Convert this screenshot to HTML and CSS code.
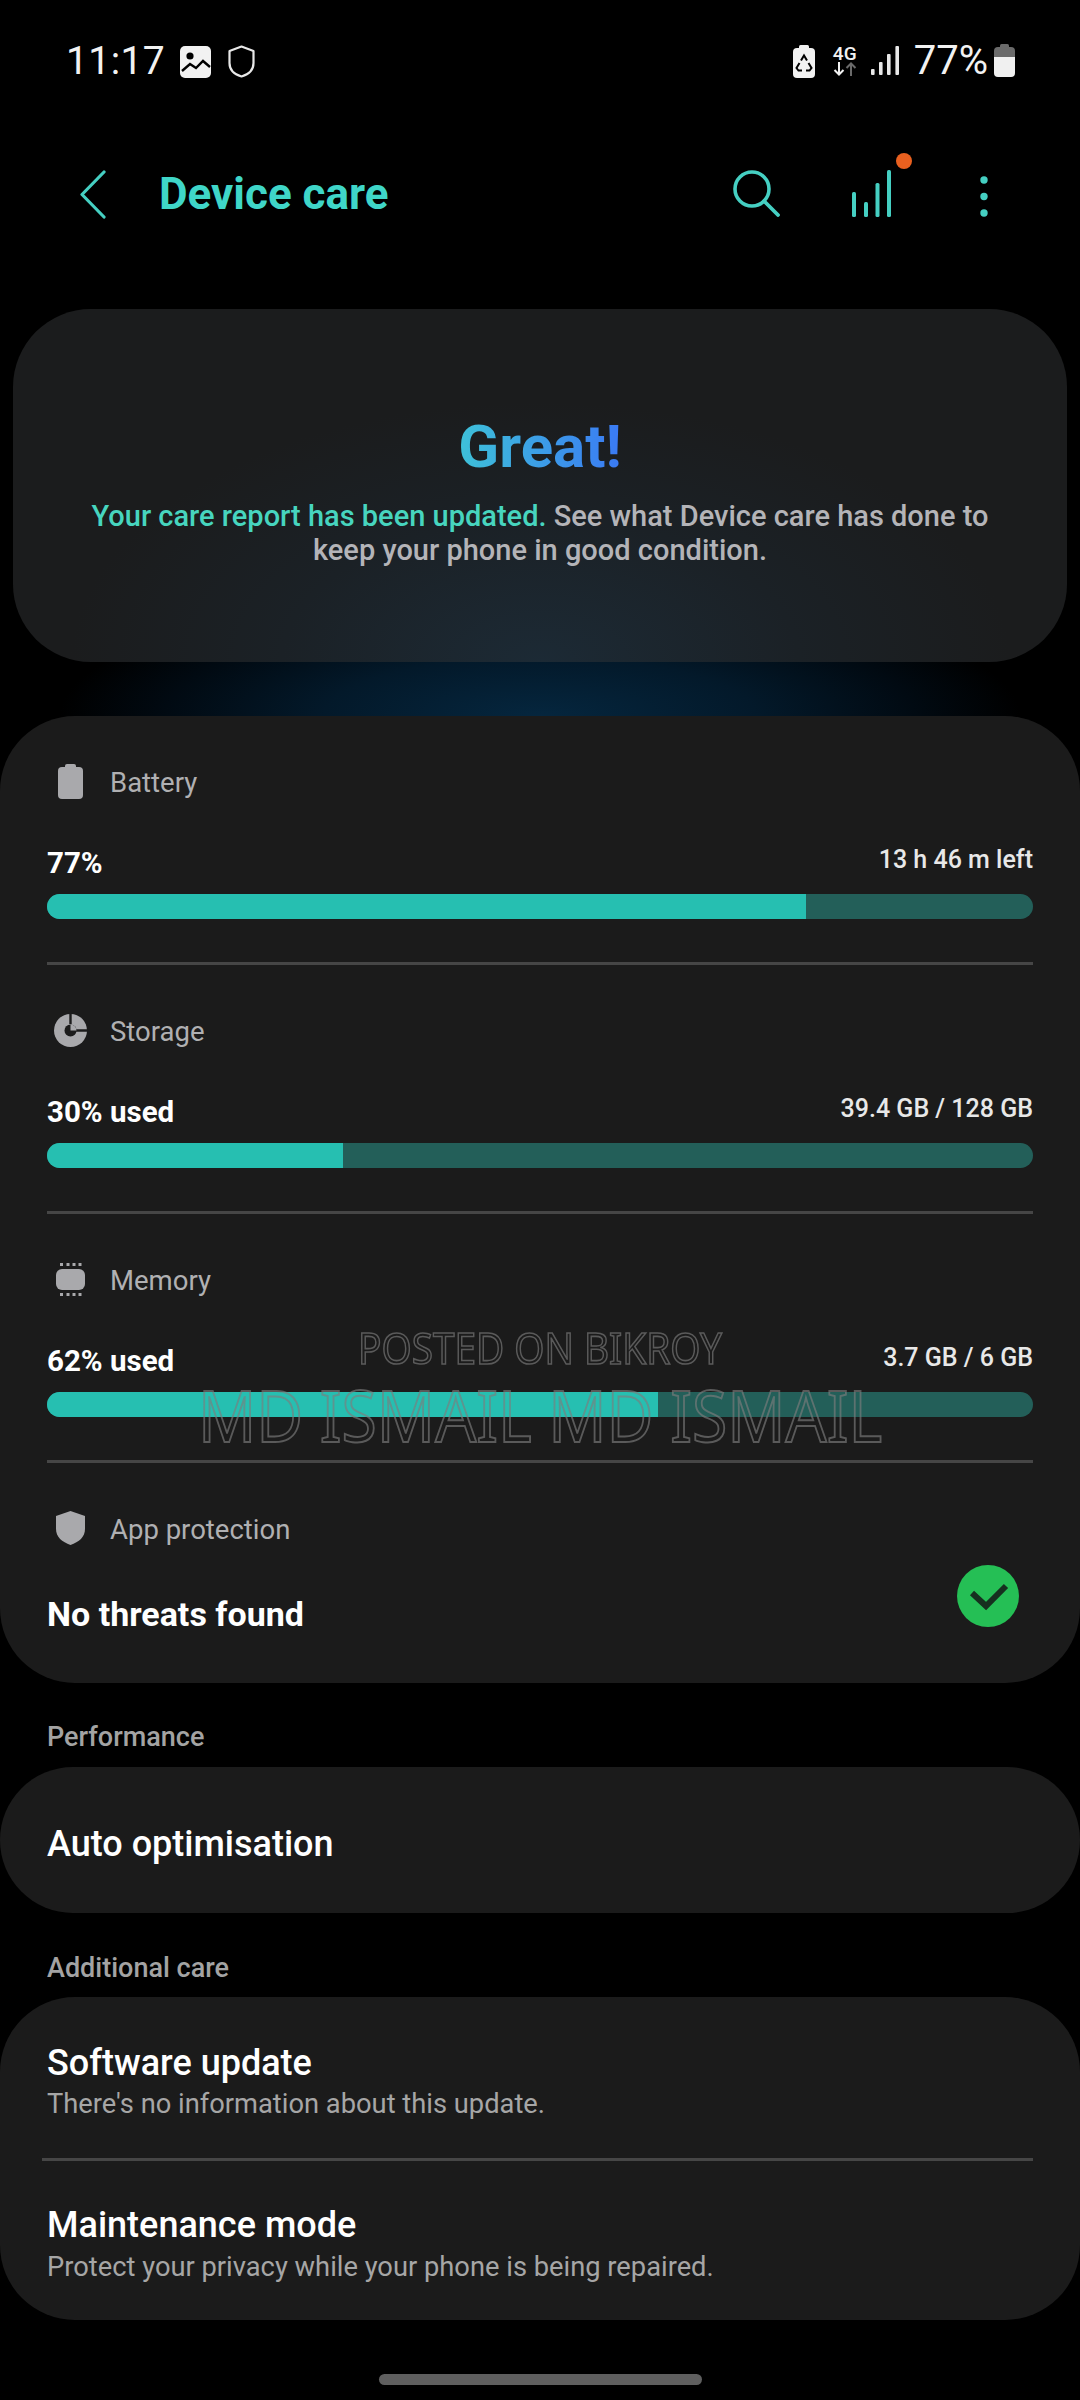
FILE: index.html
```html
<!DOCTYPE html>
<html lang="en">
<head>
<meta charset="utf-8">
<title>Device care</title>
<link rel="stylesheet" href="styles.css">
</head>
<body>
<div class="status">
  <span class="time">11:17</span>
  <svg class="st-image" width="31" height="32" viewBox="0 0 31 32"><rect width="31" height="32" rx="5" fill="#f2f2f2"/><circle cx="10" cy="10" r="3.6" fill="#000"/><path d="M2 25l8-7 6 4 7-7 7 6" fill="none" stroke="#000" stroke-width="2.4"/></svg>
  <svg class="st-shield" width="27" height="33" viewBox="0 0 27 33"><path d="M13.5 1.5L25.5 6v12c0 7-5 11.500-12 13.500C6.500 29.500 1.500 25 1.500 18V6z" fill="none" stroke="#e8e8e8" stroke-width="2.2" stroke-linejoin="round"/></svg>
  <span class="st-spacer"></span>
  <svg class="st-recycle" width="22" height="33" viewBox="0 0 22 33"><rect x="6" width="10" height="4" rx="1.500" fill="#f2f2f2"/><rect y="3" width="22" height="30" rx="4" fill="#f2f2f2"/><path d="M8 15.500l3-5 3 5M6.500 18l-3 5 2 2.500h3.500M15.500 18l3 5-2 2.500H13" fill="none" stroke="#000" stroke-width="2"/></svg>
  <span class="st-net"><span class="st-4g">4G</span><svg width="24" height="14" viewBox="0 0 24 14"><path d="M6 0v12M1.500 8L6 12.500 10.500 8" fill="none" stroke="#f2f2f2" stroke-width="2"/><path d="M18 14V2M13.500 6L18 1.500 22.500 6" fill="none" stroke="#6a6a6a" stroke-width="2"/></svg></span>
  <svg class="st-signal" width="28" height="29" viewBox="0 0 28 29"><rect y="23" width="3.600" height="6" rx="1" fill="#e8e8e8"/><rect x="8" y="16" width="3.600" height="13" rx="1" fill="#e8e8e8"/><rect x="16" y="8" width="3.600" height="21" rx="1" fill="#e8e8e8"/><rect x="24.400" width="3.600" height="29" rx="1" fill="#e8e8e8"/></svg>
  <span class="st-pct">77%</span>
  <svg class="st-batt" width="21" height="33" viewBox="0 0 21 33"><rect x="6" width="9" height="4" rx="1.500" fill="#6b6b6b"/><path d="M0 13V7a4 4 0 0 1 4-4h13a4 4 0 0 1 4 4v6z" fill="#6b6b6b"/><path d="M0 13h21v16a4 4 0 0 1-4 4H4a4 4 0 0 1-4-4z" fill="#f0f0f0"/></svg>
</div>

<header class="appbar">
  <svg class="ab-back" width="27" height="49" viewBox="0 0 27 49"><path d="M25 2L3 24.500 25 47" fill="none" stroke="#45cfc2" stroke-width="3.200" stroke-linecap="round" stroke-linejoin="round"/></svg>
  <h1 class="ab-title">Device care</h1>
  <span class="ab-spacer"></span>
  <svg class="ab-search" width="47" height="47" viewBox="0 0 47 47"><circle cx="19" cy="19" r="17" fill="none" stroke="#45cfc2" stroke-width="3.600"/><path d="M31 31l14 14" fill="none" stroke="#45cfc2" stroke-width="3.800" stroke-linecap="round"/></svg>
  <span class="ab-report">
    <svg width="40" height="47" viewBox="0 0 40 47"><rect y="22" width="4" height="25" rx="1.500" fill="#45cfc2"/><rect x="12" y="32" width="4" height="15" rx="1.500" fill="#45cfc2"/><rect x="23.500" y="13" width="4" height="34" rx="1.500" fill="#45cfc2"/><rect x="35" width="4" height="47" rx="1.500" fill="#45cfc2"/></svg>
    <span class="ab-dot"></span>
  </span>
  <svg class="ab-more" width="8" height="41" viewBox="0 0 8 41"><circle cx="4" cy="4" r="3.700" fill="#45cfc2"/><circle cx="4" cy="20.500" r="3.700" fill="#45cfc2"/><circle cx="4" cy="37" r="3.700" fill="#45cfc2"/></svg>
</header>

<section class="hero-wrap">
  <div class="hero">
    <div class="hero-title">Great!</div>
    <p class="hero-text"><span class="hero-accent">Your care report has been updated.</span> See what Device care has done to keep your phone in good condition.</p>
  </div>
</section>

<section class="card card-main">
  <div class="metric">
    <div class="m-head">
      <span class="m-icon"><svg width="25" height="35" viewBox="0 0 25 35"><rect x="7" width="11" height="5" rx="2" fill="#a9a9ac"/><rect y="3" width="25" height="32" rx="4" fill="#a9a9ac"/></svg></span>
      <span class="m-label">Battery</span>
    </div>
    <div class="m-values"><span class="m-main">77%</span><span class="m-side">13 h 46 m left</span></div>
    <div class="track"><div class="fill" style="width:77%"></div></div>
  </div>
  <div class="metric">
    <div class="m-head">
      <span class="m-icon"><svg width="33" height="33" viewBox="0 0 33 33"><circle cx="16.500" cy="16.500" r="16.500" fill="#a9a9ac"/><circle cx="16.500" cy="16.500" r="6" fill="#1c1c1c"/><path d="M16.500 0v10M22 16.500h11" stroke="#1c1c1c" stroke-width="2.400"/><path d="M16.500 16.500V10.500A6 6 0 0 1 22.500 16.500z" fill="#a9a9ac"/></svg></span>
      <span class="m-label">Storage</span>
    </div>
    <div class="m-values"><span class="m-main">30% used</span><span class="m-side">39.4 GB / 128 GB</span></div>
    <div class="track"><div class="fill" style="width:30%"></div></div>
  </div>
  <div class="metric">
    <div class="m-head">
      <span class="m-icon"><svg width="29" height="33" viewBox="0 0 29 33"><rect y="6" width="29" height="21" rx="6" fill="#a9a9ac"/><path d="M4 0h3v3H4zM10.500 0h3v3h-3zM16.500 0h3v3h-3zM22.500 0h3v3h-3zM4 30h3v3H4zM10.500 30h3v3h-3zM16.500 30h3v3h-3zM22.500 30h3v3h-3z" fill="#a9a9ac"/></svg></span>
      <span class="m-label">Memory</span>
    </div>
    <div class="m-values"><span class="m-main">62% used</span><span class="m-side">3.7 GB / 6 GB</span></div>
    <div class="track"><div class="fill" style="width:62%"></div></div>
  </div>
  <div class="metric metric-last">
    <div class="m-head">
      <span class="m-icon"><svg width="29" height="34" viewBox="0 0 29 34"><path d="M14.500 0L29 5v13c0 8-6 13-14.500 16C6 31 0 26 0 18V5z" fill="#a9a9ac"/></svg></span>
      <span class="m-label">App protection</span>
    </div>
    <div class="protect">
      <span class="protect-text">No threats found</span>
      <svg class="protect-check" width="62" height="62" viewBox="0 0 62 62"><circle cx="31" cy="31" r="31" fill="#25bf55"/><path d="M15 28l14 13L49 21" fill="none" stroke="#16301f" stroke-width="6"/></svg>
    </div>
  </div>
</section>

<h2 class="sec-label">Performance</h2>
<section class="card card-single"><span class="row-title">Auto optimisation</span></section>

<h2 class="sec-label sec-label-second">Additional care</h2>
<section class="card card-list">
  <div class="row row-first">
    <div class="row-title">Software update</div>
    <div class="row-sub">There's no information about this update.</div>
  </div>
  <div class="row row-second">
    <div class="row-title">Maintenance mode</div>
    <div class="row-sub">Protect your privacy while your phone is being repaired.</div>
  </div>
</section>

<div class="home-bar"></div>

<div class="watermark">
  <div class="wm-small">POSTED ON BIKROY</div>
  <div class="wm-large">MD ISMAIL MD ISMAIL</div>
</div>
</body>
</html>
```

FILE: styles.css
```css
* { box-sizing: border-box; }
html, body { margin: 0; padding: 0; }
body {
  width: 1080px;
  height: 2400px;
  background: #000;
  color: #fff;
  font-family: Roboto, "Liberation Sans", sans-serif;
  overflow: hidden;
  position: relative;
}

/* Status bar */
.status {
  height: 120px;
  padding: 45px 65px 0 66px;
  display: flex;
  align-items: flex-start;
}
.time { font-size: 39px; line-height: 32px; color: #f2f2f2; letter-spacing: .4px; }
.st-image { margin-left: 15px; margin-top: 1px; }
.st-shield { margin-left: 17px; }
.st-spacer { flex: 1; }
.st-net { margin-left: 18px; margin-top: 1px; display: flex; flex-direction: column; align-items: center; width: 24px; gap: 1px; }
.st-4g { font-size: 19px; line-height: 15px; font-weight: 500; color: #f2f2f2; }
.st-signal { margin-left: 14px; margin-top: 1px; }
.st-pct { margin-left: 15px; font-size: 40px; line-height: 32px; color: #f2f2f2; }
.st-batt { margin-left: 6px; margin-top: -1px; }

/* App bar */
.appbar {
  height: 116px;
  padding: 49px 92px 0 79px;
  display: flex;
  align-items: flex-start;
}
.ab-back { margin-top: 1px; }
.ab-title { margin: 0 0 0 53px; font-size: 44px; line-height: 50px; font-weight: 700; color: #3fd6c8; }
.ab-spacer { flex: 1; }
.ab-search { margin-top: 1px; }
.ab-report { position: relative; margin-left: 72px; width: 40px; height: 47px; margin-top: 1px; }
.ab-report svg { display: block; }
.ab-dot {
  position: absolute;
  width: 16px;
  height: 16px;
  border-radius: 50%;
  background: #e9601f;
  right: -20px;
  top: -17px;
}
.ab-more { margin-left: 88px; margin-top: 7px; }

/* Hero */
.hero-wrap {
  margin-top: 54px;
  height: 426px;
  padding: 19px 13px 0;
  background: radial-gradient(ellipse 480px 130px at 50% 100%, #05263e 0%, #03192a 45%, #010a12 78%, #000 100%);
}
.hero {
  height: 353px;
  border-radius: 78px;
  background: radial-gradient(ellipse 470px 260px at 50% 100%, #1c2a35 0%, #1b2126 55%, #1b1c1d 100%);
  padding-top: 102px;
  text-align: center;
}
.hero-title {
  font-size: 60px;
  line-height: 72px;
  font-weight: 700;
  background: linear-gradient(90deg, #3ec3d8 0%, #3a78f5 100%);
  -webkit-background-clip: text;
  background-clip: text;
  color: transparent;
  width: 170px;
  margin: 0 auto;
}
.hero-text { margin: 16px 60px 0; font-size: 29px; line-height: 34px; font-weight: 500; color: #b4b4b8; }
.hero-accent { color: #47d5bf; }

/* Cards */
.card { background: #1b1b1b; border-radius: 75px; }
.card-main { height: 967px; padding: 0 47px; }
.metric { height: 249px; padding-top: 48px; border-bottom: 3px solid #464646; }
.metric-last { border-bottom: 0; }
.m-head { height: 34px; display: flex; align-items: center; gap: 17px; }
.m-icon { width: 47px; display: flex; justify-content: center; }
.m-icon svg { display: block; }
.m-label { font-size: 27.5px; line-height: 34px; color: #b0b0b2; margin-left: -1px; position: relative; top: 2px; }
.m-values { margin-top: 48px; height: 36px; display: flex; justify-content: space-between; align-items: flex-start; }
.m-main { font-size: 29.500px; line-height: 36px; font-weight: 700; color: #fff; margin-top: -1px; }
.m-side { font-size: 25px; line-height: 36px; font-weight: 500; color: #e8e8e8; margin-top: -4px; }
.track { margin-top: 12px; height: 25px; border-radius: 13px; background: #235f59; overflow: hidden; }
.fill { height: 100%; background: #26bfb1; }
.protect { margin-top: 20px; display: flex; justify-content: space-between; align-items: flex-end; padding-right: 14px; }
.protect-text { font-size: 34px; line-height: 44px; font-weight: 700; margin-bottom: -9px; }

.sec-label { margin: 37px 0 13px 47px; font-size: 27px; line-height: 34px; font-weight: 500; color: #a3a3a3; }
.sec-label-second { margin-top: 38px; margin-bottom: 12px; }
.card-single { height: 146px; padding: 7px 47px 0; display: flex; align-items: center; }
.row-title { font-size: 36px; line-height: 40px; font-weight: 500; color: #fff; }
.card-list { height: 323px; padding-left: 47px; padding-right: 47px; }
.row { padding-top: 46px; }
.row-second { padding-top: 44px; }
.row-first { height: 164px; border-bottom: 3px solid #464646; margin-left: -5px; padding-left: 5px; }
.row-sub { margin-top: 4px; font-size: 27.300px; line-height: 34px; color: #a6a6a6; }
.row-second .row-sub { margin-top: 5px; }

.home-bar { margin: 54px auto 0; width: 323px; height: 11px; border-radius: 6px; background: #5f5f5f; }

/* Watermark overlays the memory row */
.watermark {
  position: absolute;
  left: 0;
  right: 0;
  top: 1321px;
  text-align: center;
  font-family: "Noto Sans", sans-serif;
  color: transparent;
  pointer-events: none;
}
.wm-small { font-size: 43px; line-height: 54px; transform: scaleX(.9); -webkit-text-stroke: 1.6px rgba(125, 125, 125, .65); }
.wm-large { font-size: 71px; line-height: 80px; transform: scaleX(.905); -webkit-text-stroke: 2px rgba(125, 125, 125, .65); }
```
